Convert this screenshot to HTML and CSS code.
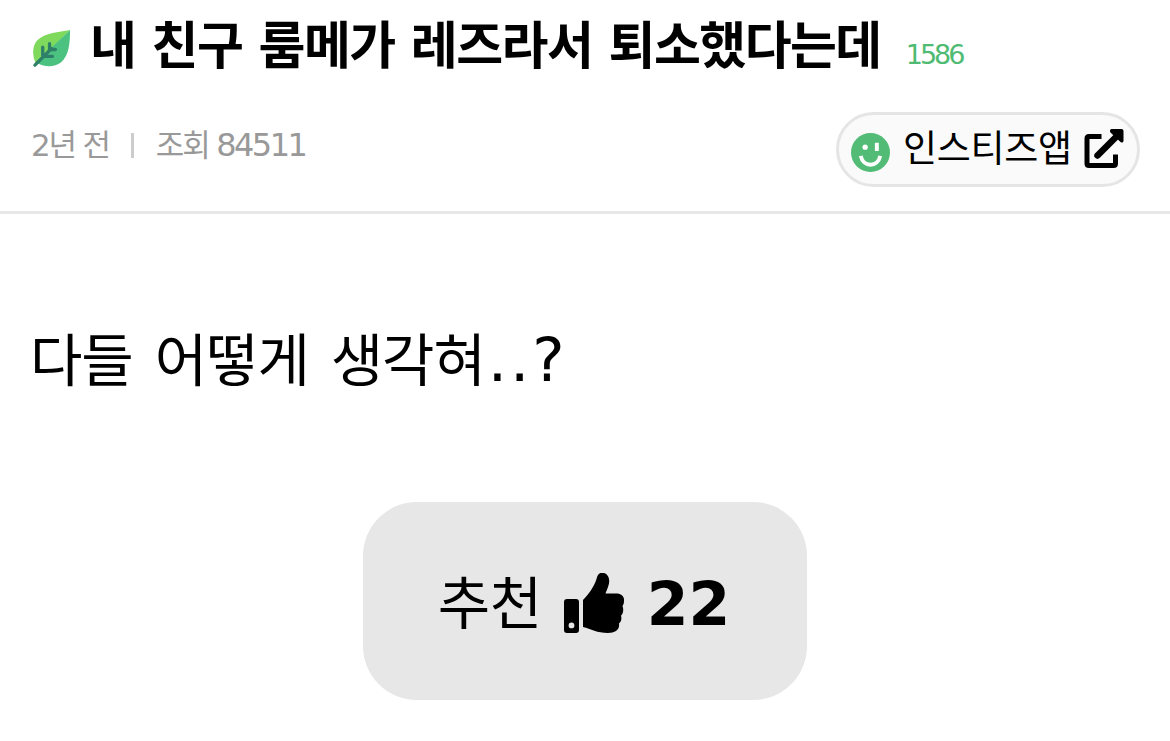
FILE: index.html
```html
<!DOCTYPE html>
<html lang="ko">
<head>
  <meta charset="UTF-8">
  <meta name="viewport" content="width=device-width, initial-scale=1">
  <title>내 친구 룸메가 레즈라서 퇴소했다는데</title>
  <link rel="stylesheet" href="styles.css">
</head>

<body>

<div class="post-header">
  <div class="title-row">
    <svg class="leaf" viewBox="0 0 40 40">
      <path d="M39 1C27 3 14 4 6 11C0 17 0 27 4 35Z" fill="#7ed95c"/>
      <path d="M39 1C39 14 38 27 30 34C22 40 12 39 4 34Z" fill="#4cc281"/>
      <path d="M3 37L20 20M11 28V18.500M11 28H21M18 22V15M18 21H24" fill="none" stroke="#2f8069" stroke-width="3.400" stroke-linecap="round"/>
    </svg>
    <h1 class="title">내 친구 룸메가 레즈라서 퇴소했다는데</h1>
    <span class="comment-count">1586</span>
  </div>

  <div class="info-row">
    <div class="meta">
      <span>2년 전</span>
      <span class="divider"></span>
      <span>조회 <span class="views">84511</span></span>
    </div>
    <a class="app-btn" href="#">
      <svg class="smile" viewBox="0 0 40 40">
        <circle cx="20" cy="20" r="20" fill="#52bb75"/>
        <circle cx="14.500" cy="14.500" r="2.700" fill="#fff"/>
        <path d="M26.500 10V18.500" stroke="#fff" stroke-width="4"/>
        <path d="M10 23.500C12.500 35.500 27.500 35.500 30 23.500" fill="none" stroke="#fff" stroke-width="4"/>
      </svg>
      <span class="app-name">인스티즈앱</span>
      <svg class="external" viewBox="0 0 40 40">
        <path d="M17.500 7.500H5Q3 7.500 3 9.500V34.500Q3 36.500 5 36.500H29.500Q31.500 36.500 31.500 34.500V25.500" fill="none" stroke="#000" stroke-width="5" stroke-linejoin="round"/>
        <path d="M13.500 26.500L34 6" fill="none" stroke="#000" stroke-width="6.500" stroke-linecap="round"/>
        <path d="M27.500 0H37.500Q39.500 0 39.500 2V12Q39 14.500 36.500 13L26.500 3.500Q25 .5 27.500 0Z"/>
      </svg>
    </a>
  </div>
</div>

<div class="post-body">
  <p class="content">다들 어떻게 생각혀<span class="punct">..?</span></p>

  <button class="like-btn">
    <span class="like-label">추천</span>
    <svg class="thumb" viewBox="0 0 60 60">
      <path fill-rule="evenodd" d="M3 26H12Q15 26 15 29V57Q15 60 12 60H3Q0 60 0 57V29Q0 26 3 26ZM7.500 49.500A2.900 2.900 0 1 0 7.500 55.300A2.900 2.900 0 1 0 7.500 49.500Z"/>
      <path d="M19 27C24 22 30 14 32.500 6C33.500 1 36 -1 40 0C46 2 46 9 44 14C43 17 42 19 41.500 20.500H51C58 20 60.500 24 60 28C60 31 59 32 58.500 33C60 37 59 41 57 42.500C58 46 57 49 55 50.500C56 57 51 60 44 60C33 60 27 56 19 54Z"/>
    </svg>
    <span class="like-count">22</span>
  </button>
</div>

</body>
</html>
```
FILE: styles.css
```css
* {
  box-sizing: border-box;
}
body {
  font-family: "DejaVu Sans", "Noto Sans CJK KR", sans-serif;
  margin: 0;
  background: #fff;
  color: #000;
}
.post-header {
  height: 214px;
  padding: 9px 30px 0 32px;
  border-bottom: 3px solid #e7e7e7;
}
.title-row {
  display: flex;
  align-items: center;
  height: 76px;
}
.leaf {
  width: 39px;
  height: 39px;
  margin-top: 2px;
  margin-right: 19px;
}
.title {
  margin: 0;
  font-size: 51px;
  line-height: 76px;
  font-weight: bold;
  letter-spacing: -1.55px;
  white-space: nowrap;
}
.comment-count {
  margin-left: 25px;
  margin-top: 15px;
  font-size: 27px;
  letter-spacing: -3px;
  color: #4fbb72;
}
.info-row {
  display: flex;
  justify-content: space-between;
  margin-top: 27px;
}
.meta {
  display: flex;
  align-items: center;
  height: 66px;
  margin-left: -1px;
  font-size: 31px;
  line-height: 46px;
  letter-spacing: -2.2px;
  color: #999;
}
.views {
  font-size: 32px;
  letter-spacing: -2.5px;
}
.divider {
  width: 3px;
  height: 25px;
  margin: 0 22px;
  background: #ccc;
}
.app-btn {
  display: flex;
  align-items: center;
  width: 304px;
  height: 75px;
  padding-left: 12px;
  border: 3px solid #e5e5e5;
  border-radius: 38px;
  background: #fafafa;
  color: #000;
  text-decoration: none;
}
.smile {
  width: 39px;
  height: 39px;
  margin-top: 5px;
  margin-right: 13px;
}
.app-name {
  width: 170px;
  margin-right: 11px;
  font-size: 37px;
  line-height: 60px;
  letter-spacing: -0.3px;
  white-space: nowrap;
}
.external {
  width: 40px;
  height: 40px;
  margin-bottom: 2px;
}
.post-body {
  display: flex;
  flex-direction: column;
  align-items: center;
  padding: 105px 30px 0;
}
.content {
  align-self: flex-start;
  margin: 0;
  font-size: 57px;
  line-height: 84px;
  letter-spacing: -1.1px;
  word-spacing: 5px;
}
.punct {
  margin-left: 3px;
  font-size: 61px;
  line-height: 1;
  letter-spacing: 2.8px;
}
.like-btn {
  display: flex;
  align-items: center;
  justify-content: center;
  width: 444px;
  height: 198px;
  margin-top: 99px;
  padding: 0;
  border: none;
  border-radius: 54px;
  background: #e7e7e7;
  color: #000;
  font-family: inherit;
  font-size: 57px;
  cursor: pointer;
}
.like-label {
  margin-left: -2px;
  padding-bottom: 4px;
  letter-spacing: -0.5px;
}
.thumb {
  width: 60px;
  height: 60px;
  margin: 3px 23px 0 22px;
}
.like-count {
  padding-top: 5px;
  font-size: 60px;
  font-weight: bold;
}
```
